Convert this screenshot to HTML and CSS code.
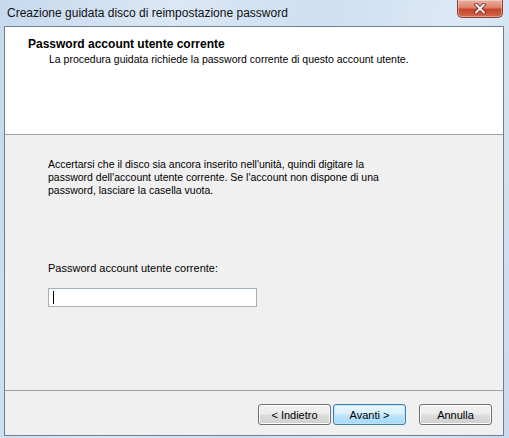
FILE: index.html
```html
<!DOCTYPE html>
<html lang="it">
<head>
  <meta charset="UTF-8">
  <meta name="viewport" content="width=device-width, initial-scale=1.0">
  <title>Creazione guidata disco di reimpostazione password</title>
  <link rel="stylesheet" href="styles.css">
</head>
<body>

  <div class="finestra">
    <div class="barraTitolo">
      <span class="titolo">Creazione guidata disco di reimpostazione password</span>
      <button class="chiudi" type="button" aria-label="Chiudi">
        <svg width="14" height="11" viewBox="0 0 14 11">
          <path d="M3 1.5 L11 9.5 M11 1.5 L3 9.5" stroke="#6b2418" stroke-width="3.6" stroke-linecap="round"/>
          <path d="M3 1.5 L11 9.5 M11 1.5 L3 9.5" stroke="#f4f4f4" stroke-width="2" stroke-linecap="round"/>
        </svg>
      </button>
    </div>

    <div class="cliente">
      <div class="intestazione">
        <div class="intestazioneTitolo">Password account utente corrente</div>
        <div class="intestazioneSotto">La procedura guidata richiede la password corrente di questo account utente.</div>
      </div>

      <div class="corpo">
        <p class="spiegazione">Accertarsi che il disco sia ancora inserito nell'unità, quindi digitare la<br>password dell'account utente corrente. Se l'account non dispone di una<br>password, lasciare la casella vuota.</p>
        <label class="etichetta" for="passwordCorrente">Password account utente corrente:</label>
        <div class="campo">
          <input type="password" id="passwordCorrente">
          <span class="cursore"></span>
        </div>
      </div>

      <div class="piede">
        <button class="pulsante" type="button">&lt; Indietro</button>
        <button class="pulsante predefinito" type="button">Avanti &gt;</button>
        <button class="pulsante annulla" type="button">Annulla</button>
      </div>
    </div>
  </div>

</body>
</html>
```

FILE: styles.css
```css
body {
  margin: 0;
  padding: 0;
  font-family: "Liberation Sans", Arial, sans-serif;
  font-size: 10.5px;
  color: #000000;
}

.finestra {
  width: 509px;
  height: 438px;
  display: flex;
  flex-direction: column;
  background: linear-gradient(100deg, #c6d9ee 0%, #dae7f5 30%, #cddff1 55%, #dde9f6 80%, #c8dbef 100%);
  overflow: hidden;
}

.barraTitolo {
  height: 26px;
  display: flex;
  justify-content: space-between;
  align-items: flex-start;
  flex-shrink: 0;
}

.titolo {
  font-size: 12px;
  margin: 6px 0 0 7px;
  color: #111111;
}

.chiudi {
  width: 46px;
  height: 18px;
  margin-right: 6px;
  padding: 0;
  border: 1px solid #8a4236;
  border-top: none;
  border-radius: 0 0 5px 5px;
  background: linear-gradient(#eab0a2 0%, #dc8068 45%, #c7432a 55%, #d46a4e 100%);
  display: flex;
  align-items: center;
  justify-content: center;
  box-shadow: inset 0 0 0 1px rgba(255, 255, 255, 0.35);
}

.cliente {
  flex: 1;
  margin: 0 5px 2px 4px;
  border: 1px solid #6f7f92;
  display: flex;
  flex-direction: column;
  background-color: #f0f0f0;
}

.intestazione {
  height: 107px;
  background-color: #ffffff;
  border-bottom: 1px solid #a0a0a0;
  flex-shrink: 0;
}

.intestazioneTitolo {
  font-weight: bold;
  font-size: 12px;
  margin: 10px 0 0 23px;
}

.intestazioneSotto {
  margin: 2px 0 0 44px;
}

.corpo {
  flex: 1;
  border-bottom: 1px solid #a0a0a0;
  padding: 23px 0 0 43px;
}

.spiegazione {
  margin: 0;
  line-height: 13px;
}

.etichetta {
  display: block;
  margin-top: 65px;
  font-size: 11px;
}

.campo {
  position: relative;
  width: 209px;
  height: 19px;
  margin-top: 14px;
}

.campo input {
  box-sizing: border-box;
  width: 209px;
  height: 19px;
  margin: 0;
  border: 1px solid #abadb3;
  border-top-color: #a0b4c8;
  border-radius: 0;
  background-color: #ffffff;
  outline: none;
}

.cursore {
  position: absolute;
  left: 5px;
  top: 3px;
  width: 1px;
  height: 13px;
  background-color: #000000;
}

.piede {
  box-sizing: border-box;
  height: 44px;
  flex-shrink: 0;
  display: flex;
  align-items: flex-start;
  padding: 13px 0 0 253px;
}

.pulsante {
  width: 73px;
  height: 21px;
  margin-right: 2px;
  padding: 0;
  font-family: "Liberation Sans", Arial, sans-serif;
  font-size: 11px;
  color: #000000;
  border: 1px solid #707070;
  border-radius: 3px;
  background: linear-gradient(#f2f2f2 0%, #ebebeb 48%, #dddddd 52%, #cfcfcf 100%);
  box-shadow: inset 0 0 0 1px #fcfcfc;
}

.predefinito {
  border-color: #3c7fb1;
  background: linear-gradient(#eaf6fd 0%, #d9f0fc 48%, #bee6fd 52%, #a7d9f5 100%);
  box-shadow: inset 0 0 0 1px #bfe3f8;
}

.annulla {
  margin-left: 11px;
}
```
